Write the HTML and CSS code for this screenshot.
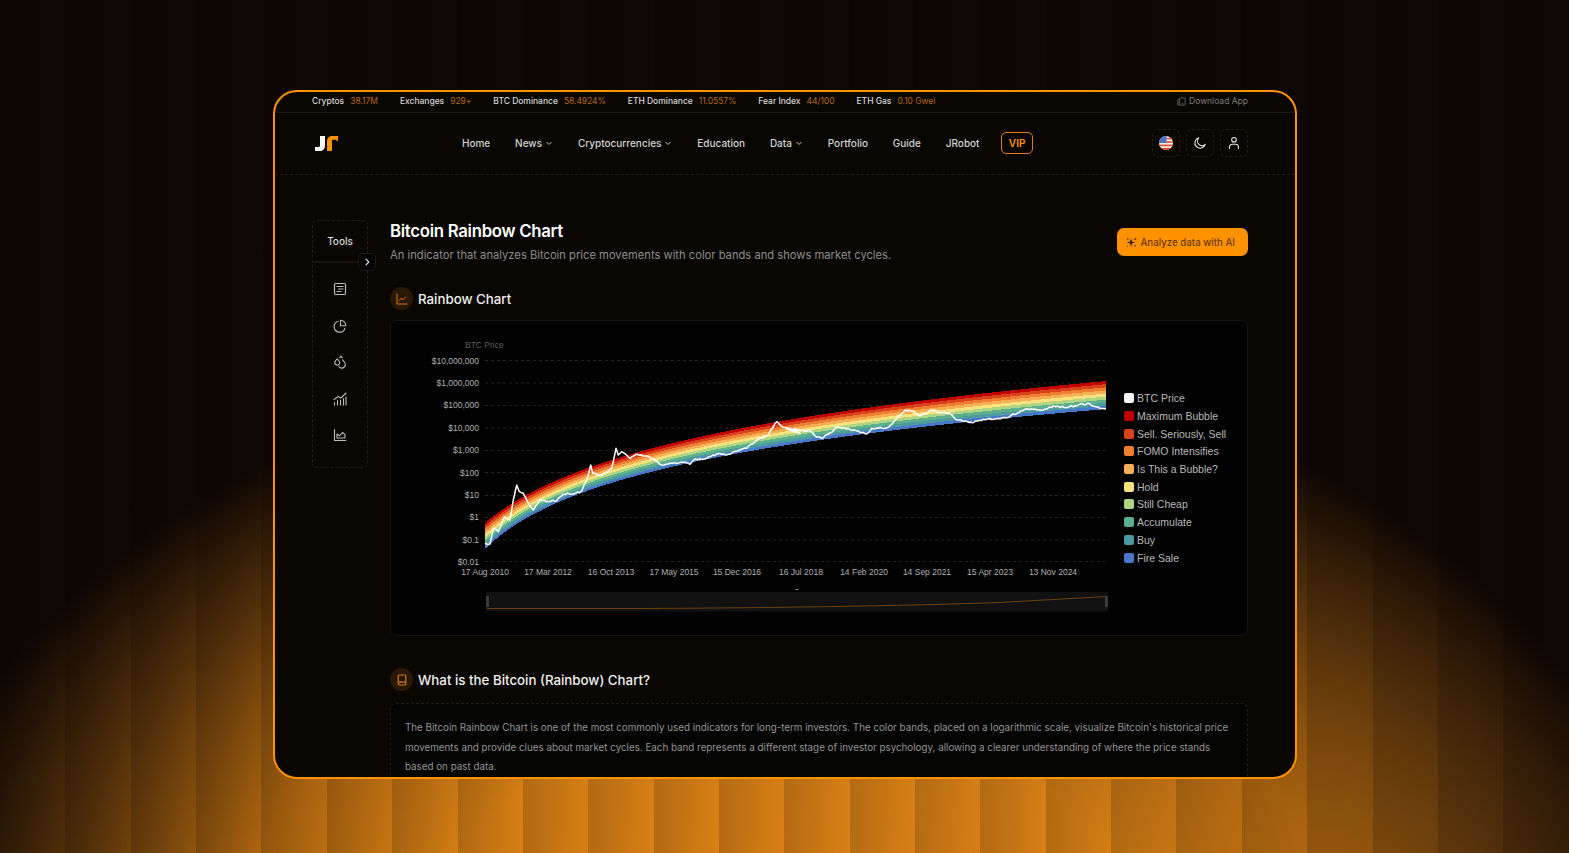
FILE: index.html
```html
<!DOCTYPE html>
<html lang="en">
<head>
<meta charset="utf-8">
<title>Bitcoin Rainbow Chart</title>
<link rel="stylesheet" href="styles.css">
</head>
<body>
<div class="window">
  <div class="topbar">
    <div class="stats">
      <span class="stat"><b>Cryptos</b><i>38.17M</i></span>
      <span class="stat"><b>Exchanges</b><i>929+</i></span>
      <span class="stat"><b>BTC Dominance</b><i>58.4924%</i></span>
      <span class="stat"><b>ETH Dominance</b><i>11.0557%</i></span>
      <span class="stat"><b>Fear Index</b><i>44/100</i></span>
      <span class="stat"><b>ETH Gas</b><i>0.10 Gwei</i></span>
    </div>
    <a class="download">
      <svg class="ic-9" viewBox="0 0 10 10" fill="none" stroke="currentColor" stroke-width=".8"><rect x="3" y="1" width="6" height="8" rx="1"/><path d="M3 2.500H1.600a.6.6 0 0 0-.6.6V9h2M5.200 7h1.600"/></svg>
      Download App
    </a>
  </div>

  <header class="header">
    <svg class="logo" viewBox="0 0 24 15" aria-label="JR logo">
      <path fill="#fff" d="M6 0h5v9.500C11 13 9 15 5.500 15H1v-4h3.600c1 0 1.400-.5 1.400-1.400z"/>
      <path fill="#ff9000" d="M13 15V5.500C13 2 15 0 18.500 0H24v5h-1.500V3.800h-3.200c-1 0-1.300.5-1.300 1.400V15z"/>
    </svg>
    <nav class="nav">
      <a>Home</a>
      <a>News<svg class="chev" viewBox="0 0 8 8" fill="none" stroke="currentColor" stroke-width=".9"><path d="M1.500 3l2.500 2.500L6.500 3"/></svg></a>
      <a>Cryptocurrencies<svg class="chev" viewBox="0 0 8 8" fill="none" stroke="currentColor" stroke-width=".9"><path d="M1.500 3l2.500 2.500L6.500 3"/></svg></a>
      <a>Education</a>
      <a>Data<svg class="chev" viewBox="0 0 8 8" fill="none" stroke="currentColor" stroke-width=".9"><path d="M1.500 3l2.500 2.500L6.500 3"/></svg></a>
      <a>Portfolio</a>
      <a>Guide</a>
      <a>JRobot</a>
      <a class="vip">VIP</a>
    </nav>
    <div class="actions">
      <button class="icon-btn">
        <svg class="ic-14" viewBox="0 0 14 14">
          <defs><clipPath id="flagclip"><circle cx="7" cy="7" r="7"/></clipPath></defs>
          <g clip-path="url(#flagclip)">
            <rect width="14" height="14" fill="#f3ece4"/>
            <rect y="1.800" width="14" height="1.700" fill="#e0573c"/>
            <rect y="5.200" width="14" height="1.700" fill="#e0573c"/>
            <rect y="8.600" width="14" height="1.700" fill="#e0573c"/>
            <rect y="12" width="14" height="2" fill="#d8431f"/>
            <rect width="7.500" height="7" fill="#4a74c4"/>
          </g>
        </svg>
      </button>
      <button class="icon-btn">
        <svg class="ic-14" viewBox="0 0 14 14" fill="none" stroke="currentColor" stroke-width="1.100" stroke-linecap="round" stroke-linejoin="round"><path d="M5.800 1.800a5.300 5.300 0 1 0 6.500 6.500 4.400 4.400 0 0 1-6.500-6.500z"/></svg>
      </button>
      <button class="icon-btn">
        <svg class="ic-14" viewBox="0 0 14 14" fill="none" stroke="currentColor" stroke-width="1.100" stroke-linecap="round"><circle cx="7" cy="3.800" r="2.300"/><path d="M2.500 12.500V11a3 3 0 0 1 3-2.800h3a3 3 0 0 1 3 2.800v1.500"/></svg>
      </button>
    </div>
  </header>

  <main class="main">
    <aside class="sidebar">
      <div class="side-title">Tools</div>
      <button class="side-toggle">
        <svg viewBox="0 0 8 8" fill="none" stroke="currentColor" stroke-width="1.100" stroke-linecap="round" stroke-linejoin="round"><path d="M3 1.200L5.800 4 3 6.800"/></svg>
      </button>
      <div class="side-icons">
        <svg class="ic-14" viewBox="0 0 14 14" fill="none" stroke="currentColor" stroke-width="1.200" stroke-linecap="round"><rect x="1.500" y="1.500" width="11" height="11" rx="1.500"/><path d="M4 4.500h6M5.500 7H10M4 9.500h4"/></svg>
        <svg class="ic-14" viewBox="0 0 14 14" fill="none" stroke="currentColor" stroke-width="1.100" stroke-linejoin="round"><path d="M5.600 2.200a5.500 5.500 0 1 0 6.400 6.600"/><path d="M7.500 1.200a5.400 5.400 0 0 1 5.300 5.600H7.500z"/></svg>
        <svg class="ic-14" viewBox="0 0 14 14" fill="none" stroke="currentColor" stroke-width="1.100" stroke-linejoin="round" stroke-linecap="round"><path d="M4.200 3.800C5.400 5 6.700 6.200 6.700 7.600a2.500 2.500 0 0 1-5 0C1.700 6.200 3 5 4.200 3.800z"/><path d="M6.800 2.800C7.200 2.200 7.600 1.700 8 1.200c.4.500.8 1 1.200 1.500M9.600 4.800c1.300 1.300 2.800 2.800 2.800 4.700a3.600 3.600 0 0 1-6.500 2.100"/></svg>
        <svg class="ic-14" viewBox="0 0 14 14" fill="none" stroke="currentColor" stroke-width="1.100" stroke-linecap="round" stroke-linejoin="round"><path d="M1 7.500l4.500-3 2.500 1.500L13 1"/><path d="M1.500 13v-2.500M4.500 13V8.500M7.500 13V8M10.500 13V6.500M13 13V5"/></svg>
        <svg class="ic-14" viewBox="0 0 14 14" fill="none" stroke="currentColor" stroke-width="1.100" stroke-linecap="round" stroke-linejoin="round"><path d="M1.500 1.500V12.500H12.800"/><path d="M4 10V6l2.500 1.800L9.500 4.500l2.500 2.200V10z"/></svg>
      </div>
    </aside>

    <div class="content">
      <div class="page-head">
        <div class="page-text">
          <h1>Bitcoin Rainbow Chart</h1>
          <p>An indicator that analyzes Bitcoin price movements with color bands and shows market cycles.</p>
        </div>
        <button class="ai-btn">
          <svg class="ic-11 ai-star" viewBox="0 0 12 12" fill="currentColor"><path d="M5.500 1.500l1.100 3.400 3.400 1.100-3.400 1.100-1.100 3.400-1.100-3.400L1 6l3.400-1.100zM10 .5l.5 1.300 1.300.5-1.300.5-.5 1.300-.5-1.300-1.300-.5 1.300-.5zM2 .8l.4 1 1 .4-1 .4-.4 1-.4-1-1-.4 1-.4zM10 8.200l.4 1 1 .4-1 .4-.4 1-.4-1-1-.4 1-.4zM1.800 9l.3.8.8.3-.8.3-.3.8-.3-.8-.8-.3.8-.3z"/></svg>
          Analyze data with AI
        </button>
      </div>

      <h2 class="sec-head first">
        <span class="sec-ic"><svg class="ic-12" viewBox="0 0 12 12" fill="none" stroke="currentColor" stroke-width="1" stroke-linejoin="round" stroke-linecap="round"><path d="M1 1v10h10"/><path d="M3 7.500l2-2 1.800 1.300L9.500 4"/></svg></span>
        Rainbow Chart
      </h2>

      <section class="chart-card">
        <svg class="chart" viewBox="391 321 725 314" width="725" height="314">
          <text class="axis-name" x="465" y="348">BTC Price</text>
          <g class="grid">
            <path d="M485 360.500H1105M485 383H1105M485 405.500H1105M485 428H1105M485 450.500H1105M485 472.500H1105M485 495.500H1105M485 517.500H1105M485 540H1105M485 561.500H1105"/>
          </g>
          <g class="ylabels">
            <text x="479" y="363.500">$10,000,000</text>
            <text x="479" y="386">$1,000,000</text>
            <text x="479" y="408">$100,000</text>
            <text x="479" y="430.500">$10,000</text>
            <text x="479" y="453">$1,000</text>
            <text x="479" y="475.500">$100</text>
            <text x="479" y="497.500">$10</text>
            <text x="479" y="520">$1</text>
            <text x="479" y="542.500">$0.1</text>
            <text x="479" y="564.500">$0.01</text>
          </g>
          <g class="xlabels">
            <text x="485" y="574.500">17 Aug 2010</text>
            <text x="548" y="574.500">17 Mar 2012</text>
            <text x="611" y="574.500">16 Oct 2013</text>
            <text x="674" y="574.500">17 May 2015</text>
            <text x="737" y="574.500">15 Dec 2016</text>
            <text x="801" y="574.500">16 Jul 2018</text>
            <text x="864" y="574.500">14 Feb 2020</text>
            <text x="927" y="574.500">14 Sep 2021</text>
            <text x="990" y="574.500">15 Apr 2023</text>
            <text x="1053" y="574.500">13 Nov 2024</text>
          </g>
          <g id="bands" class="bands"></g>
          <polyline id="price" class="price"></polyline>
          <rect class="nav-track" x="486" y="592" width="622" height="19.500"/>
          <path class="nav-line" d="M487 608.500H640C760 608 900 606 1000 602.500L1107 596.500"/>
          <rect class="nav-handle" x="486" y="596" width="3" height="11" rx="1"/>
          <rect class="nav-handle" x="1105" y="596" width="3" height="11" rx="1"/>
          <path class="nav-dots" d="M795.500 589.500h3"/>
        </svg>
        <ul class="legend">
          <li><span class="sw sw-price"></span>BTC Price</li>
          <li><span class="sw sw-1"></span>Maximum Bubble</li>
          <li><span class="sw sw-2"></span>Sell. Seriously, Sell</li>
          <li><span class="sw sw-3"></span>FOMO Intensifies</li>
          <li><span class="sw sw-4"></span>Is This a Bubble?</li>
          <li><span class="sw sw-5"></span>Hold</li>
          <li><span class="sw sw-6"></span>Still Cheap</li>
          <li><span class="sw sw-7"></span>Accumulate</li>
          <li><span class="sw sw-8"></span>Buy</li>
          <li><span class="sw sw-9"></span>Fire Sale</li>
        </ul>
      </section>

      <h2 class="sec-head second">
        <span class="sec-ic"><svg class="ic-12" viewBox="0 0 12 12" fill="none" stroke="currentColor" stroke-width="1.200" stroke-linejoin="round"><rect x="2.200" y="1" width="7.600" height="10" rx="1.200"/><path d="M2.200 8.200h7.600"/></svg></span>
        What is the Bitcoin (Rainbow) Chart?
      </h2>

      <section class="text-card">
        <p>The Bitcoin Rainbow Chart is one of the most commonly used indicators for long-term investors. The color bands, placed on a logarithmic scale, visualize Bitcoin's historical price movements and provide clues about market cycles. Each band represents a different stage of investor psychology, allowing a clearer understanding of where the price stands based on past data.</p>
      </section>
    </div>
  </main>
</div>
<script src="chart.js"></script>
</body>
</html>
```

FILE: styles.css
```css
* { box-sizing: border-box; }
html, body { margin: 0; height: 100%; }
body {
  width: 1569px;
  height: 853px;
  overflow: hidden;
  display: flex;
  align-items: flex-start;
  padding: 90px 0 0 273px;
  font-family: Inter, "Liberation Sans", sans-serif;
  background-color: #0c0603;
  background-image:
    repeating-linear-gradient(90deg, rgba(6,3,0,.17) 0, rgba(6,3,0,0) 65.36px),
    radial-gradient(ellipse 880px 610px at 50% 112%, #dc8216 0, #d47e15 40%, #ad6510 62%, #4e2d0a 84%, #0e0703 100%);
}
a { color: inherit; text-decoration: none; }
button { font: inherit; color: inherit; background: none; border: 0; padding: 0; }
h1, h2, p, ul { margin: 0; padding: 0; }
.ic-9 { width: 9px; height: 9px; }
.ic-11 { width: 11px; height: 11px; }
.ic-12 { width: 12px; height: 12px; }
.ic-14 { width: 14px; height: 14px; }

.window {
  width: 1024px;
  height: 689px;
  flex: none;
  border: 2px solid #ff9200;
  border-radius: 24px;
  overflow: hidden;
  background: #0a0702;
  color: #e8e8e8;
}

.topbar {
  height: 21px;
  display: flex;
  align-items: center;
  justify-content: space-between;
  padding: 0 47px 2px 37px;
  border-bottom: 1px solid #1c1a16;
  font-size: 8.500px;
}
.stats { display: flex; gap: 22px; }
.stat { display: flex; gap: 6px; }
.stat b { font-weight: 500; color: #d6d6d6; letter-spacing: -.02px; }
.stat i { font-style: normal; color: #b8690f; letter-spacing: -.05px; }
.download { display: flex; align-items: center; gap: 3px; color: #7d7d7d; }

.header {
  height: 62px;
  display: flex;
  align-items: center;
  padding: 0 47px 1px 39px;
  border-bottom: 1px dashed #1e1c18;
}
.logo { width: 24px; height: 15px; flex: none; }
.nav {
  display: flex;
  align-items: center;
  gap: 24.850px;
  margin-left: 124px;
  font-size: 10px;
  font-weight: 500;
  color: #d4d4d4;
}
.nav a { display: flex; align-items: center; gap: 3px; }
.chev { width: 8px; height: 8px; }
.nav .vip {
  height: 22px;
  margin-left: -3.500px;
  padding: 0 7px;
  border: 1px solid #d9800f;
  border-radius: 5px;
  color: #ff9200;
  font-weight: 600;
}
.actions { display: flex; gap: 6px; margin-left: auto; }
.icon-btn {
  width: 28px;
  height: 28px;
  display: flex;
  align-items: center;
  justify-content: center;
  border: 1px dashed #201e1a;
  border-radius: 6px;
  color: #e4e4e4;
}

.main {
  display: flex;
  align-items: flex-start;
  gap: 22px;
  padding: 45px 47px 0 37px;
}
.sidebar {
  position: relative;
  flex: none;
  width: 56px;
  height: 248px;
  border: 1px dashed #201e1a;
  border-radius: 5px;
}
.side-title {
  height: 42px;
  display: flex;
  align-items: center;
  justify-content: center;
  border-bottom: 2px solid #171512;
  font-size: 10px;
  font-weight: 500;
  color: #d8d8d8;
}
.side-toggle {
  position: absolute;
  top: 32px;
  right: -9px;
  width: 18px;
  height: 18px;
  display: flex;
  align-items: center;
  justify-content: center;
  border: 1px solid #1d1b17;
  border-radius: 5px;
  background: #050505;
  color: #e8e8e8;
}
.side-toggle svg { width: 8px; height: 8px; }
.side-icons {
  display: flex;
  flex-direction: column;
  align-items: center;
  gap: 22.500px;
  padding-top: 19px;
  color: #bdbdbd;
}

.content { flex: 1; min-width: 0; }
.page-head { display: flex; align-items: center; justify-content: space-between; }
h1 { font-size: 16.800px; line-height: 22px; font-weight: 600; color: #fff; letter-spacing: -.3px; }
.page-text p { margin-top: 5px; font-size: 11.200px; line-height: 16px; color: #8c8c8c; }
.ai-btn {
  width: 131px;
  height: 28px;
  margin-top: 1px;
  display: flex;
  align-items: center;
  gap: 4px;
  padding-left: 8.500px;
  border-radius: 7px;
  background: #ff9200;
  color: #6a3b05;
  font-size: 9.700px;
  font-weight: 500;
}
.ai-star { color: #3d2103; }

.sec-head {
  display: flex;
  align-items: center;
  gap: 5px;
  height: 23px;
  font-size: 13.300px;
  font-weight: 500;
  color: #f0f0f0;
}
.sec-head.first { margin-top: 24px; }
.sec-head.second { margin-top: 32px; }
.sec-ic {
  width: 23px;
  height: 23px;
  display: flex;
  align-items: center;
  justify-content: center;
  border-radius: 50%;
  background: #2a1806;
  color: #d9780f;
}

.chart-card {
  display: flex;
  height: 316px;
  margin-top: 10px;
  border: 1px solid #151412;
  border-radius: 6px;
  background: #020202;
}
.chart { display: block; flex: none; }
.chart text { font-family: "Liberation Sans", Arial, sans-serif; font-size: 8.500px; fill: #b0b0b0; }
.chart .axis-name { fill: #5e5e5e; }
.grid path { fill: none; stroke: #242424; stroke-width: 1; stroke-dasharray: 3 3; }
.ylabels text { text-anchor: end; }
.xlabels text { text-anchor: middle; }
.bands { shape-rendering: crispEdges; }
.price { fill: none; stroke: #fff; stroke-width: 1.500; stroke-linejoin: round; }
.nav-track { fill: #121212; }
.nav-line { fill: none; stroke: #6d4110; stroke-width: 1; }
.nav-handle { fill: #3c3c3c; }
.nav-dots { stroke: #888; stroke-width: 1; }

.legend {
  list-style: none;
  margin: 68.500px 0 0 8px;
  font-family: "Liberation Sans", Arial, sans-serif;
  font-size: 10.500px;
  color: #b8b8b8;
}
.legend li { display: flex; align-items: center; gap: 3px; height: 17.700px; }
.sw { width: 10px; height: 10px; border-radius: 2px; }
.sw-price { background: #f4f4f4; }
.sw-1 { background: #c00500; }
.sw-2 { background: #d9431b; }
.sw-3 { background: #ee7e32; }
.sw-4 { background: #f6ae57; }
.sw-5 { background: #fae27f; }
.sw-6 { background: #aed581; }
.sw-7 { background: #5cb08c; }
.sw-8 { background: #4f9aa0; }
.sw-9 { background: #4a78c8; }

.text-card {
  margin-top: 12px;
  height: 120px;
  padding: 14px;
  border: 1px dashed #201e1a;
  border-radius: 6px;
  background: #040403;
}
.text-card p { font-size: 9.800px; line-height: 19.500px; color: #949494; }
```

FILE: chart.js
```js
// Rainbow bands follow a log regression over the page-space chart coordinates.
(function () {
  var START = 485, END = 1106;
  function upper(x) { return 798 - 63.7 * Math.log(x - 410); }
  function lower(x) { return 777.4 - 56.5 * Math.log(x - 428); }

  var colors = ['#c00500', '#d9431b', '#ee7e32', '#f6ae57', '#fae27f', '#aed581', '#5cb08c', '#4f9aa0', '#4a78c8'];
  var NS = 'http://www.w3.org/2000/svg';
  var bands = document.getElementById('bands');

  colors.forEach(function (color, i) {
    var up = [], down = [], x;
    for (x = START; x <= END; x += 3) {
      var t = upper(x), h = lower(x) - t;
      up.push(x + ',' + (t + h * i / 9).toFixed(2));
      down.unshift(x + ',' + (t + h * (i + 1) / 9).toFixed(2));
    }
    var p = document.createElementNS(NS, 'polygon');
    p.setAttribute('points', up.concat(down).join(' '));
    p.setAttribute('fill', color);
    bands.appendChild(p);
  });

  // BTC price trace, read off the reference in two runs of zoomed coordinates.
  var a = [[255,640],[270,642],[280,595],[295,605],[313,560],[330,570],[340,510],[350,465],[358,485],[370,490],[385,520],[400,540],[420,508],[440,515],[470,512],[490,492],[520,492],[545,483],[560,450],[572,405],[578,430],[600,437],[635,415],[648,355],[655,375],[665,365],[690,385],[710,372],[735,378],[760,388],[785,405],[810,400],[850,397],[870,403],[885,387],[920,385],[950,372],[985,373],[1020,360],[1040,355],[1070,330],[1100,318],[1130,275],[1150,292],[1170,295],[1200,310]];
  var b = [[20,297],[60,300],[95,305],[110,322],[130,323],[175,290],[230,302],[260,312],[275,295],[325,292],[350,265],[375,240],[400,242],[420,258],[455,240],[480,248],[510,250],[530,270],[580,278],[610,268],[680,263],[735,238],[790,240],[820,228],[860,233],[900,222],[930,222],[960,235],[978,237]];
  var key = a.map(function (p) { return [400 + p[0] / 3, 330 + p[1] / 3]; })
    .concat(b.map(function (p) { return [780 + p[0] / 3, 330 + p[1] / 3]; }));

  // Fill the gaps between key points with small repeatable daily wobble.
  var pts = [];
  function wobble(n) { var s = Math.sin(n * 12.9898) * 43758.5453; return (s - Math.floor(s) - 0.5) * 1.8; }
  key.forEach(function (p, i) {
    pts.push(p[0].toFixed(1) + ',' + p[1].toFixed(1));
    var q = key[i + 1];
    if (!q) return;
    var steps = Math.floor((q[0] - p[0]) / 2);
    for (var k = 1; k < steps; k++) {
      var f = k / steps;
      pts.push((p[0] + (q[0] - p[0]) * f).toFixed(1) + ',' + (p[1] + (q[1] - p[1]) * f + wobble(i * 31 + k)).toFixed(1));
    }
  });
  document.getElementById('price').setAttribute('points', pts.join(' '));
})();
```
